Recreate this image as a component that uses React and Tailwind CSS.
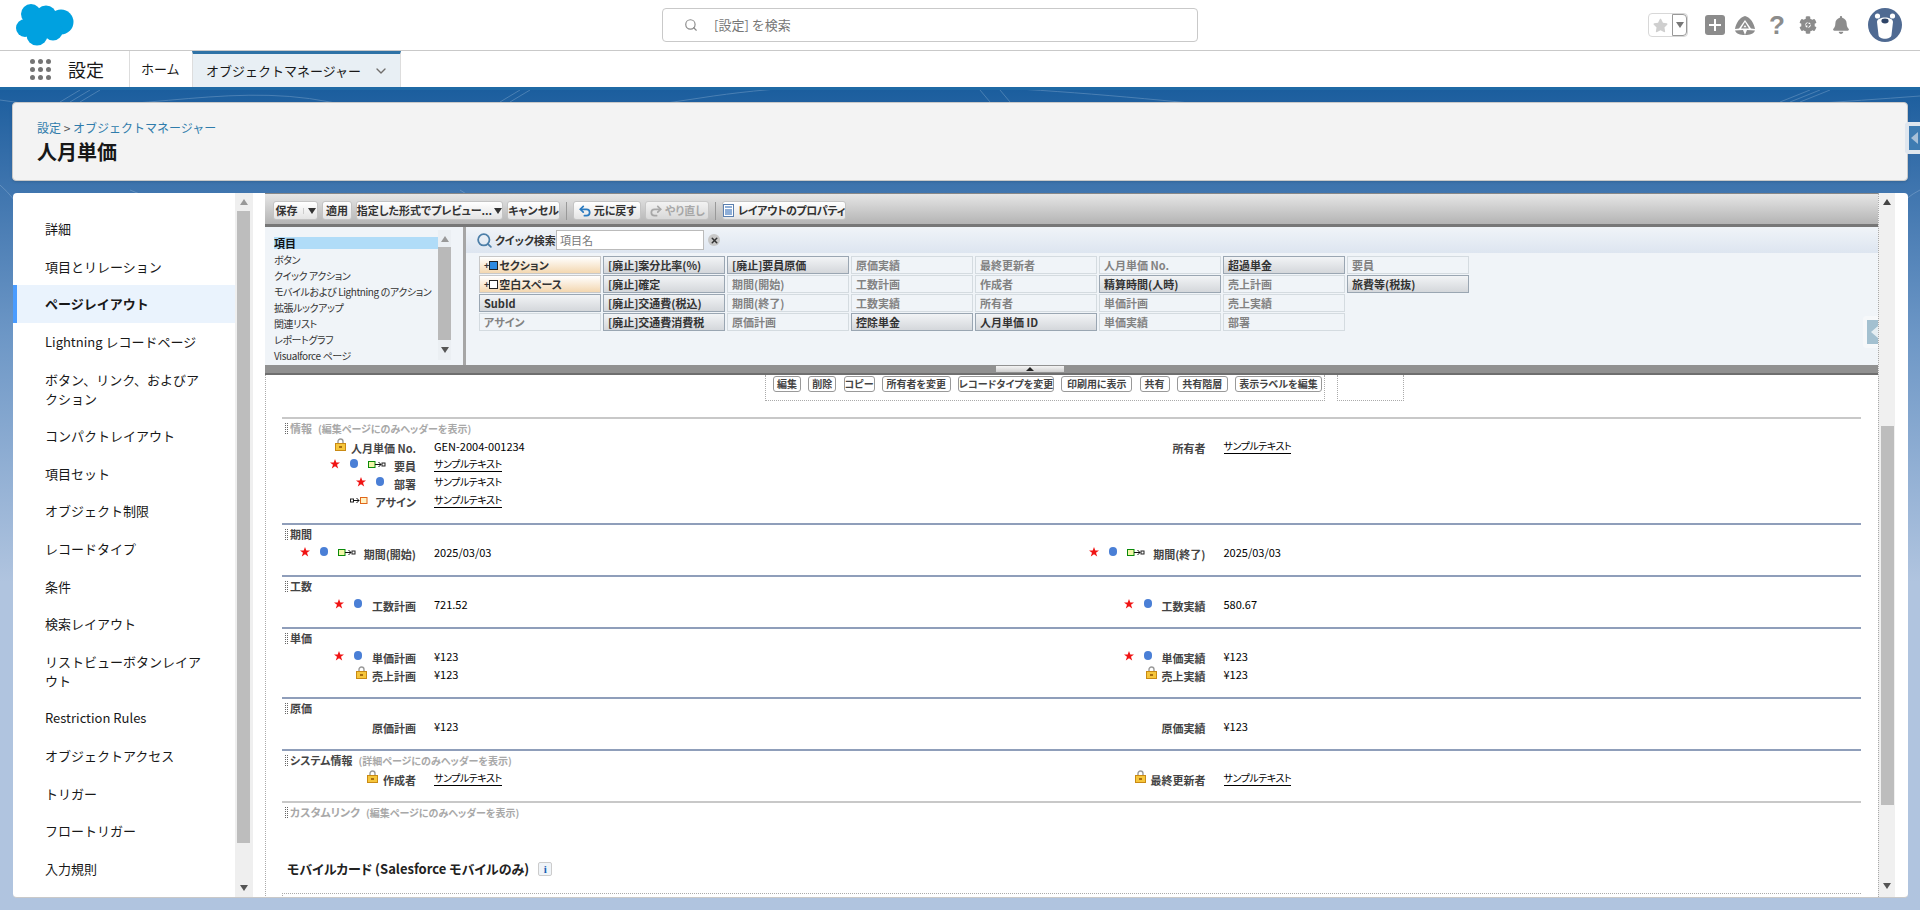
import React from "react";
import { Search, ChevronDown, Undo2, Redo2, X } from "lucide-react";
import { FaBell, FaCog, FaStar } from "react-icons/fa";

const sideItems = [
  "詳細",
  "項目とリレーション",
  "ページレイアウト",
  "Lightning レコードページ",
  "ボタン、リンク、およびアクション",
  "コンパクトレイアウト",
  "項目セット",
  "オブジェクト制限",
  "レコードタイプ",
  "条件",
  "検索レイアウト",
  "リストビューボタンレイアウト",
  "Restriction Rules",
  "オブジェクトアクセス",
  "トリガー",
  "フロートリガー",
  "入力規則",
];

const categories = [
  "ボタン",
  "クイック アクション",
  "モバイルおよび Lightning のアクション",
  "拡張ルックアップ",
  "関連リスト",
  "レポートグラフ",
  "Visualforce ページ",
];

const paletteFields = [
  ["セクション", "o"], ["空白スペース", "o"], ["SubId", "d"], ["アサイン", "l"],
  ["[廃止]案分比率(%)", "d"], ["[廃止]確定", "d"], ["[廃止]交通費(税込)", "d"], ["[廃止]交通費消費税", "d"],
  ["[廃止]要員原価", "d"], ["期間(開始)", "l"], ["期間(終了)", "l"], ["原価計画", "l"],
  ["原価実績", "l"], ["工数計画", "l"], ["工数実績", "l"], ["控除単金", "d"],
  ["最終更新者", "l"], ["作成者", "l"], ["所有者", "l"], ["人月単価 ID", "d"],
  ["人月単価 No.", "l"], ["精算時間(人時)", "d"], ["単価計画", "l"], ["単価実績", "l"],
  ["超過単金", "d"], ["売上計画", "l"], ["売上実績", "l"], ["部署", "l"],
  ["要員", "l"], ["旅費等(税抜)", "d"],
];

const layoutButtons = [
  ["編集", "w-[28px]"],
  ["削除", "w-[28px]"],
  ["コピー", "w-[31px]"],
  ["所有者を変更", "w-[69px]"],
  ["レコードタイプを変更", "w-[96px]"],
  ["印刷用に表示", "w-[71px]"],
  ["共有", "w-[30px]"],
  ["共有階層", "w-[51px]"],
  ["表示ラベルを編集", "w-[87px]"],
];

const SAMPLE = "サンプルテキスト";

const sections = [
  {
    title: "情報", note: "(編集ページにのみヘッダーを表示)", muted: true, h: "h-[106px]",
    rows: [
      [{ icons: ["lock"], label: "人月単価 No.", value: "GEN-2004-001234" }, { label: "所有者", value: SAMPLE, link: true }],
      [{ icons: ["star", "dot", "lookup"], label: "要員", value: SAMPLE, link: true }],
      [{ icons: ["star", "dot"], label: "部署", value: SAMPLE }],
      [{ icons: ["assign"], label: "アサイン", value: SAMPLE, link: true }],
    ],
  },
  {
    title: "期間", h: "h-[52px]",
    rows: [[
      { icons: ["star", "dot", "lookup"], label: "期間(開始)", value: "2025/03/03" },
      { icons: ["star", "dot", "lookup"], label: "期間(終了)", value: "2025/03/03" },
    ]],
  },
  {
    title: "工数", h: "h-[52px]",
    rows: [[
      { icons: ["star", "dot"], label: "工数計画", value: "721.52" },
      { icons: ["star", "dot"], label: "工数実績", value: "580.67" },
    ]],
  },
  {
    title: "単価", h: "h-[70px]",
    rows: [
      [{ icons: ["star", "dot"], label: "単価計画", value: "¥123" }, { icons: ["star", "dot"], label: "単価実績", value: "¥123" }],
      [{ icons: ["lock"], label: "売上計画", value: "¥123" }, { icons: ["lock"], label: "売上実績", value: "¥123" }],
    ],
  },
  {
    title: "原価", h: "h-[52px]",
    rows: [[{ label: "原価計画", value: "¥123" }, { label: "原価実績", value: "¥123" }]],
  },
  {
    title: "システム情報", note: "(詳細ページにのみヘッダーを表示)", h: "h-[52px]",
    rows: [[
      { icons: ["lock"], label: "作成者", value: SAMPLE, link: true },
      { icons: ["lock"], label: "最終更新者", value: SAMPLE, link: true },
    ]],
  },
  { title: "カスタムリンク", note: "(編集ページにのみヘッダーを表示)", muted: true, h: "h-[58px]", rows: [] },
];

const Cloud = () => (
  <svg width="58" height="42" viewBox="0 0 58 42" className="fill-[#00a1e0]">
    <circle cx="15" cy="10" r="10" />
    <circle cx="30" cy="12" r="10.5" />
    <circle cx="45" cy="18" r="12.5" />
    <circle cx="21" cy="31" r="10.5" />
    <circle cx="9" cy="24" r="9" />
    <circle cx="37" cy="27" r="9.5" />
    <rect x="10" y="12" width="34" height="18" />
  </svg>
);

const Trailhead = () => (
  <svg width="20" height="19" viewBox="0 0 20 19" className="fill-[#8c8c8c]">
    <path d="M10 0 C4.5 1.5 1 7 0 13 L4 12.5 L10 4 L16 12.5 L20 13 C19 7 15.5 1.5 10 0 Z" />
    <path fillRule="evenodd" d="M10 6 L6 12.5 H14 Z M10 9 L8.5 11.2 H11.5 Z" />
    <path d="M0 14.5 L8 14 L10 19 C5 19 1.5 18 0 14.5 Z M20 14.5 L12 14 L10 19 C15 19 18.5 18 20 14.5 Z" />
  </svg>
);

const Bear = () => (
  <svg width="34" height="34" viewBox="0 0 34 34">
    <circle cx="17" cy="17" r="17" fill="#4f6a92" />
    <circle cx="9.5" cy="8" r="2.6" fill="#fff" />
    <circle cx="24.5" cy="8" r="2.6" fill="#fff" />
    <path d="M9 14 C9 8 25 8 25 14 L23.5 27 C23 32 11 32 10.5 27 Z" fill="#fff" />
    <ellipse cx="17" cy="13" rx="3.6" ry="2.4" fill="#2f4568" />
  </svg>
);

const Lock = () => (
  <svg width="11" height="13" viewBox="0 0 11 13" className="shrink-0">
    <path d="M3 6 V3.5 a2.5 2.5 0 0 1 5 0 V6" fill="none" stroke="#9a9a9a" strokeWidth="1.4" />
    <rect x="0.5" y="5.5" width="10" height="7" fill="#f6c63c" stroke="#c98a14" />
    <rect x="4" y="8" width="3" height="2" fill="#a86f10" />
  </svg>
);

const RedStar = () => (
  <svg width="10" height="10" viewBox="0 0 10 10" className="shrink-0 fill-[#f01414]">
    <polygon points="5,0 6.3,3.5 10,3.5 7,5.8 8.2,9.6 5,7.3 1.8,9.6 3,5.8 0,3.5 3.7,3.5" />
  </svg>
);

const Lookup = ({ reverse }) => (
  <svg width="18" height="7" viewBox="0 0 18 7" className="shrink-0">
    {reverse ? (
      <>
        <rect x="0.5" y="2" width="3" height="3" fill="#fff" stroke="#222" />
        <path d="M3 3.5 H9 M6.5 1 L9 3.5 L6.5 6" fill="none" stroke="#111" />
        <rect x="10.5" y="0.5" width="6.5" height="6" fill="#fff3c4" stroke="#e0661a" />
      </>
    ) : (
      <>
        <rect x="0.5" y="0.5" width="6.5" height="6" fill="#f2f7a8" stroke="#0a8a0a" />
        <path d="M7 3.5 H13 M10.5 1 L13 3.5 L10.5 6" fill="none" stroke="#111" />
        <rect x="14" y="2" width="3" height="3" fill="#fff" stroke="#222" />
      </>
    )}
  </svg>
);

const LabelIcon = ({ type }) => {
  if (type === "lock") return <span className="mr-[5px] -mt-[4px] flex"><Lock /></span>;
  if (type === "star") return <span className="mr-[10px] flex"><RedStar /></span>;
  if (type === "dot") return <span className="mr-[10px] -mt-[2px] h-[9px] w-[8px] shrink-0 rounded-full bg-[#4a7fd6]" />;
  if (type === "lookup") return <span className="mr-[8px] flex"><Lookup /></span>;
  return <span className="mr-[7px] flex"><Lookup reverse /></span>;
};

const Field = ({ field }) => (
  <div className="flex w-[791px] items-center">
    {field && (
      <>
        <div className="flex w-[134px] items-center justify-end">
          {(field.icons || []).map((ic, i) => (
            <LabelIcon key={i} type={ic} />
          ))}
          <span className="mt-[4px] text-[11px] leading-[14px] font-bold whitespace-nowrap text-[#444]">{field.label}</span>
        </div>
        <span
          className={`ml-[18px] leading-[14px] whitespace-nowrap text-black ${field.value === SAMPLE ? "text-[10px] tracking-[-0.45px]" : "text-[11px]"} ${field.link ? "border-b border-black" : ""}`}
        >
          {field.value}
        </span>
      </>
    )}
  </div>
);

const Section = ({ s }) => (
  <div className={`border-t-2 ${s.h} ${s.muted ? "border-[#c8c8c8]" : "border-[#8f9eba]"}`}>
    <div className="flex h-[18px] items-center pl-[3px]">
      <span className="mr-[2px] h-[11px] w-[3px] border-x border-dotted border-[#666]" />
      <span className={`text-[11px] font-bold ${s.muted ? "text-[#a8a8a8]" : "text-[#444]"}`}>{s.title}</span>
      {s.note && <span className="ml-[6px] text-[10px] font-bold text-[#a8a8a8]">{s.note}</span>}
    </div>
    {s.rows.map((r, i) => (
      <div key={i} className="flex h-[18px]">
        <Field field={r[0]} />
        <Field field={r[1]} />
      </div>
    ))}
  </div>
);

const ToolButton = ({ className, muted, children }) => (
  <div className={`flex h-[19px] shrink-0 items-center justify-center gap-[2px] rounded-[3px] border border-[#c4c4c4] bg-gradient-to-b from-white to-[#e4e4e4] text-[11px] leading-none font-bold whitespace-nowrap ${muted ? "text-[#9a9a9a] opacity-70" : "text-[#333]"} ${className}`}>
    {children}
  </div>
);

const Arrow = ({ up, className }) => (
  <div className={`h-0 w-0 border-x-[4px] border-x-transparent ${up ? "border-b-[6px] border-b-[#999]" : "border-t-[6px] border-t-[#555]"} ${className || ""}`} />
);

export default function App() {
  return (
    <div className="flex h-[910px] w-[1920px] flex-col overflow-hidden bg-white font-['Noto_Sans_CJK_JP','Noto_Sans',sans-serif] text-[#181818]">
      {/* global header */}
      <header className="flex h-[51px] shrink-0 items-center border-b border-[#c9c9c9] bg-white">
        <div className="ml-[16px] w-[646px]">
          <Cloud />
        </div>
        <div className="flex h-[34px] w-[536px] items-center rounded-[4px] border border-[#c9c9c9] pl-[21px]">
          <Search size={14} className="text-[#8a8a8a]" />
          <span className="ml-[16px] text-[13px] text-[#777]">[設定] を検索</span>
        </div>
        <div className="ml-[450px] flex h-[24px] w-[40px] rounded-[4px] border border-[#d8d8d8]">
          <div className="flex w-[23px] items-center justify-center">
            <FaStar size={15} className="text-[#cfcfcf]" />
          </div>
          <div className="flex flex-1 items-center justify-center rounded-r-[4px] border border-[#999]">
            <Arrow className="!border-t-[#777]" />
          </div>
        </div>
        <div className="ml-[17px] flex h-[20px] w-[20px] items-center justify-center rounded-[3px] bg-[#8c8c8c]">
          <span className="relative block h-[12px] w-[12px]">
            <span className="absolute top-[5px] left-0 h-[2px] w-[12px] bg-white" />
            <span className="absolute top-0 left-[5px] h-[12px] w-[2px] bg-white" />
          </span>
        </div>
        <div className="ml-[10px] flex w-[20px] justify-center">
          <Trailhead />
        </div>
        <span className="ml-[12px] w-[20px] text-center font-['Liberation_Sans',sans-serif] text-[26px] leading-none font-bold text-[#8c8c8c]">?</span>
        <div className="relative ml-[12px] flex w-[18px] justify-center">
          <FaCog size={18} className="text-[#8c8c8c]" />
          <svg width="6" height="8" viewBox="0 0 6 8" className="absolute top-[5px] left-[6px] fill-[#8c8c8c]">
            <path d="M4 0 L0 4.5 H2.5 L2 8 L6 3 H3.5 Z" />
          </svg>
        </div>
        <div className="ml-[14px] flex w-[20px] justify-center">
          <FaBell size={18} className="text-[#8c8c8c]" />
        </div>
        <div className="ml-[17px]">
          <Bear />
        </div>
      </header>

      {/* app nav */}
      <nav className="flex h-[39px] shrink-0 border-b-[3px] border-[#1f6aa5] bg-white">
        <div className="ml-[30px] grid h-[21px] w-[21px] grid-cols-3 gap-[3px] self-center">
          {Array.from({ length: 9 }).map((_, i) => (
            <span key={i} className="h-[5px] w-[5px] rounded-full bg-[#747474]" />
          ))}
        </div>
        <span className="ml-[17px] w-[61px] self-center text-[18px] leading-none">設定</span>
        <div className="flex w-[63px] items-center border-l border-[#dddddd] pl-[11px] text-[13px]">ホーム</div>
        <div className="flex w-[209px] items-center border-x border-t-[3px] border-x-[#dddddd] border-t-[#2e72a6] bg-[#e8eff4] pr-[11px] pl-[13px] text-[13px]">
          <span className="flex-1">オブジェクトマネージャー</span>
          <ChevronDown size={16} className="text-[#706e6b]" />
        </div>
      </nav>

      {/* page */}
      <main className="relative flex-1 bg-gradient-to-b from-[#1b5e9e] from-0% via-[#6d97c6] via-30% to-[#b0c4df] to-60% pt-[12px] pr-[12px] pl-[12px]">
        <svg className="absolute inset-0 h-[180px] w-full opacity-25" viewBox="0 0 1920 180" fill="none" stroke="#cfe0f2" strokeWidth="1">
          <path d="M0 10 C120 30 220 -10 330 12 S560 30 700 8 S1000 -6 1200 14 S1600 30 1920 6" />
          <path d="M0 95 C40 130 20 160 70 180 M130 100 C180 120 240 150 300 176 M460 100 C520 140 620 180 700 170 M900 178 C980 130 1100 150 1200 178 M1400 176 C1500 140 1620 140 1700 178 M1860 180 C1900 150 1880 120 1920 100" />
          <path d="M80 0 L60 12 M90 0 L70 12 M100 0 L80 12 M500 12 L520 0 M510 12 L530 0 M980 0 L990 12 M1000 0 L1010 12 M1780 12 L1810 0 M1790 12 L1820 0 M1800 12 L1830 0" />
        </svg>

        <div className="relative flex h-[79px] flex-col justify-center rounded-[4px] border border-[#c9c9c9] bg-[#f3f3f3] pl-[24px] shadow-sm">
          <div className="text-[12px] leading-[18px] text-[#2f7cab]">
            設定 <span className="text-[#555]">&gt;</span> オブジェクトマネージャー
          </div>
          <h1 className="mt-[2px] text-[20px] leading-[26px] font-bold">人月単価</h1>
        </div>

        <div className="relative mt-[12px] ml-[1px] flex h-[705px] overflow-hidden rounded-[4px] border-b border-[#c9c9c9] bg-white">
          {/* left menu */}
          <aside className="flex w-[222px] shrink-0 flex-col pt-[17px]">
            {sideItems.map((item) =>
              item === "ページレイアウト" ? (
                <div key={item} className="border-l-4 border-[#4a9cff] bg-[#eaf3fd] py-[9.3px] pr-[24px] pl-[28px] text-[13px] leading-[19px] font-bold">
                  {item}
                </div>
              ) : (
                <div key={item} className="py-[9.3px] pr-[24px] pl-[32px] text-[13px] leading-[19px] break-all">
                  {item}
                </div>
              ),
            )}
          </aside>
          <div className="flex w-[18px] shrink-0 flex-col items-start bg-[#efefef] pb-[6px] pl-[2px]">
            <div className="flex h-[18px] w-[13px] items-center justify-center"><Arrow up /></div>
            <div className="h-[632px] w-[13px] bg-[#bdbdbd]" />
            <div className="flex flex-1 w-[13px] items-end justify-center"><Arrow /></div>
          </div>

          {/* editor */}
          <section className="ml-[12px] flex w-[1613px] shrink-0 flex-col overflow-hidden text-[11px] [font-feature-settings:'palt']">
            <div className="flex h-[31px] shrink-0 items-center gap-[4px] border-t border-[#888] bg-gradient-to-b from-[#e6e6e6] to-[#b4b4b4] pt-[3px] pl-[8px]">
              <ToolButton className="w-[45px]">保存<span className="ml-[3px] border-l border-[#ccc] pl-[4px]"><Arrow className="!border-t-[#333]" /></span></ToolButton>
              <ToolButton className="w-[30px]">適用</ToolButton>
              <ToolButton className="w-[147px]">指定した形式でプレビュー...<Arrow className="!border-t-[#333]" /></ToolButton>
              <ToolButton className="w-[53px]">キャンセル</ToolButton>
              <span className="mx-[2px] h-[18px] w-px bg-[#999]" />
              <ToolButton className="w-[68px]"><Undo2 size={14} strokeWidth={3} className="text-[#2b7bc0]" />元に戻す</ToolButton>
              <ToolButton className="w-[64px]" muted><Redo2 size={14} strokeWidth={3} />やり直し</ToolButton>
              <span className="mx-[2px] h-[18px] w-px bg-[#999]" />
              <ToolButton className="w-[124px] tracking-[-0.4px]">
                <svg width="11" height="13" viewBox="0 0 11 13" className="mr-[2px] shrink-0">
                  <rect x="0.5" y="0.5" width="10" height="12" fill="#fff" stroke="#5b7fae" />
                  <path d="M2 3 H9 M2 6 H9 M2 8 H9 M2 10 H9" stroke="#1f5fb0" />
                </svg>
                レイアウトのプロパティ
              </ToolButton>
            </div>

            <div className="h-[3px] shrink-0 bg-[#777]" />

            {/* palette */}
            <div className="flex h-[138px] shrink-0 bg-[#f0f4f8]">
              <div className="flex w-[198px] shrink-0">
                <div className="w-[173px] shrink-0 pt-[10px] pl-[9px] text-[10px] leading-[16px] text-[#333]">
                  <div className="h-[12px] bg-[#b0dcf8] text-[11px] leading-[12px] font-bold text-[#111]">項目</div>
                  <div className="mt-[3px]">
                    {categories.map((c) => (
                      <div key={c} className="whitespace-nowrap tracking-[-0.4px]">{c}</div>
                    ))}
                  </div>
                </div>
                <div className="mt-[3px] flex h-[130px] w-[13px] flex-col items-center bg-[#ebeff3] pt-[6px]">
                  <Arrow up />
                  <div className="mt-[5px] h-[93px] w-full bg-[#b9b9b9]" />
                  <Arrow className="mt-[7px]" />
                </div>
              </div>
              <div className="w-[3px] shrink-0 bg-[#a6a6a6]" />
              <div className="flex flex-1 flex-col">
                <div className="flex h-[26px] shrink-0 items-center bg-gradient-to-b from-[#f0f4f8] to-[#dde5f0] pl-[10px]">
                  <Search size={17} strokeWidth={2.5} className="text-[#4d7fa8]" />
                  <span className="ml-[2px] w-[60px] font-bold whitespace-nowrap text-[#333]">クイック検索</span>
                  <div className="ml-[1px] flex h-[20px] w-[148px] items-center border border-[#bbb] bg-white pl-[3px] text-[11px] text-[#777]">項目名</div>
                  <div className="ml-[4px] flex h-[12px] w-[12px] items-center justify-center rounded-full bg-[#c8c8c8]">
                    <X size={9} strokeWidth={4} className="text-[#333]" />
                  </div>
                </div>
                <div className="mt-[3px] ml-[13px] grid grid-flow-col grid-rows-[repeat(4,18px)] auto-cols-[122px] gap-x-[2px] gap-y-px">
                  {paletteFields.map(([name, kind]) => (
                    <div
                      key={name}
                      className={`flex items-center overflow-hidden pl-[4px] whitespace-nowrap font-bold ${
                        kind === "o"
                          ? "border border-[#c8c8c8] bg-gradient-to-b from-white to-[#f3d7b0] text-[#333]"
                          : kind === "d"
                            ? "border border-[#9aa6b2] bg-gradient-to-b from-[#f2f4f6] to-[#d4d7db] text-[#333]"
                            : "border border-[#d4dbe0] bg-[#f0f4f8] text-[#828282]"
                      }`}
                    >
                      {kind === "o" && (
                        <span className="mr-[1px] flex items-center">
                          <span className="text-[9px] leading-none">+</span>
                          <span className={`h-[9px] w-[9px] border border-[#222] ${name === "セクション" ? "bg-[#2e8ae0]" : "bg-white"}`} />
                        </span>
                      )}
                      {name}
                    </div>
                  ))}
                </div>
              </div>
            </div>
            <div className="relative flex h-[10px] shrink-0 justify-center border-b-2 border-[#6f6f6f] bg-[#919191] pr-[84px]">
              <div className="mt-px flex h-[6px] w-[68px] items-center justify-center bg-gradient-to-b from-[#f4f4f4] to-[#cfcfcf]">
                <div className="h-0 w-0 border-x-[4px] border-b-[4px] border-x-transparent border-b-[#222]" />
              </div>
            </div>

            <div className="flex-1 border-l border-dotted border-[#aaa]">
              {/* preview buttons */}
              <div className="flex h-[26px] shrink-0 pl-[499px]">
                <div className="flex h-full w-[560px] items-start justify-between border-x border-b border-dotted border-[#aaa] pt-px pr-[2px] pl-[7px]">
                  {layoutButtons.map(([name, w]) => (
                    <div key={name} className={`flex h-[16px] items-center justify-center rounded-[3px] border border-[#999] bg-white text-[10px] leading-none font-bold whitespace-nowrap text-[#444] ${w}`}>
                      {name}
                    </div>
                  ))}
                </div>
                <div className="ml-[12px] h-full w-[67px] border-x border-b border-dotted border-[#aaa]" />
              </div>

              {/* layout sections */}
              <div className="mt-[16px] ml-[16px] w-[1579px]">
                {sections.map((s) => (
                  <Section key={s.title} s={s} />
                ))}
                <div className="flex h-[20px] items-center pl-[5px]">
                  <span className="text-[13px] font-bold whitespace-nowrap text-[#222]">モバイルカード (Salesforce モバイルのみ)</span>
                  <span className="ml-[9px] flex h-[14px] w-[14px] items-center justify-center rounded-[2px] border border-[#ccc] bg-[#f0f4f8] font-['Liberation_Serif',serif] text-[11px] leading-none font-bold text-[#1a5fb4]">i</span>
                </div>
                <div className="mt-[14px] h-[5px] border-t border-l border-dotted border-[#aaa]" />
              </div>
            </div>
          </section>

          <div className="flex w-[17px] shrink-0 flex-col items-center border-l border-dotted border-[#aaa] bg-[#f0f0f0]">
            <div className="flex h-[18px] items-center"><Arrow up className="!border-b-[#444]" /></div>
            <div className="mt-[215px] h-[379px] w-[13px] bg-[#bdbdbd]" />
            <div className="mt-[78px]"><Arrow /></div>
          </div>
        </div>

        {/* right side flyout handles */}
        <div className="absolute top-[32px] left-[1905px] flex h-[32px] w-[15px] items-center justify-center rounded-l-[4px] border-[4px] border-r-0 border-[#dfe6ee] bg-[#3f7cb2]">
          <div className="h-0 w-0 border-y-[6px] border-r-[7px] border-y-transparent border-r-[#a8c0d8]" />
        </div>
        <div className="absolute top-[226px] left-[1863px] flex h-[32px] w-[15px] items-center justify-end rounded-l-[4px] border-[4px] border-r-0 border-[#f6f8fa] bg-[#a3c0d0]">
          <div className="h-0 w-0 border-y-[6px] border-r-[7px] border-y-transparent border-r-[#e6eef2]" />
        </div>
      </main>
    </div>
  );
}
